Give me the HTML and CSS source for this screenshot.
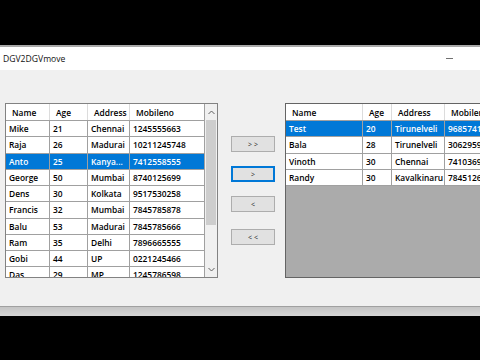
FILE: index.html
```html
<!DOCTYPE html>
<html>
<head>
<meta charset="utf-8">
<link rel="stylesheet" href="styles.css">
</head>
<body>
<div class="letterbox-top"></div>
<div class="window">
  <div class="titlebar">
    <span class="title">DGV2DGVmove</span>
    <span class="minimize"></span>
  </div>
  <div class="client">
    <div class="dgv dgv-left">
      <div class="dgv-body">
        <div class="row head">
          <div class="cell l-name">Name</div>
          <div class="cell l-age">Age</div>
          <div class="cell l-addr">Address</div>
          <div class="cell l-mob">Mobileno</div>
        </div>
        <div class="row"><div class="cell l-name">Mike</div><div class="cell l-age">21</div><div class="cell l-addr">Chennai</div><div class="cell l-mob">1245555663</div></div>
        <div class="row"><div class="cell l-name">Raja</div><div class="cell l-age">26</div><div class="cell l-addr">Madurai</div><div class="cell l-mob">10211245748</div></div>
        <div class="row sel"><div class="cell l-name">Anto</div><div class="cell l-age">25</div><div class="cell l-addr">Kanya...</div><div class="cell l-mob">7412558555</div></div>
        <div class="row"><div class="cell l-name">George</div><div class="cell l-age">50</div><div class="cell l-addr">Mumbai</div><div class="cell l-mob">8740125699</div></div>
        <div class="row"><div class="cell l-name">Dens</div><div class="cell l-age">30</div><div class="cell l-addr">Kolkata</div><div class="cell l-mob">9517530258</div></div>
        <div class="row"><div class="cell l-name">Francis</div><div class="cell l-age">32</div><div class="cell l-addr">Mumbai</div><div class="cell l-mob">7845785878</div></div>
        <div class="row"><div class="cell l-name">Balu</div><div class="cell l-age">53</div><div class="cell l-addr">Madurai</div><div class="cell l-mob">7845785666</div></div>
        <div class="row"><div class="cell l-name">Ram</div><div class="cell l-age">35</div><div class="cell l-addr">Delhi</div><div class="cell l-mob">7896665555</div></div>
        <div class="row"><div class="cell l-name">Gobi</div><div class="cell l-age">44</div><div class="cell l-addr">UP</div><div class="cell l-mob">0221245466</div></div>
        <div class="row"><div class="cell l-name">Das</div><div class="cell l-age">29</div><div class="cell l-addr">MP</div><div class="cell l-mob">1245786598</div></div>
      </div>
      <div class="vscroll">
        <div class="arrow"><svg width="7" height="5" viewBox="0 0 7 5"><polyline points="0.5,4 3.5,1 6.5,4" fill="none" stroke="#606060" stroke-width="1"/></svg></div>
        <div class="thumb"></div>
        <div class="track"></div>
        <div class="arrow"><svg width="7" height="5" viewBox="0 0 7 5"><polyline points="0.5,1 3.5,4 6.5,1" fill="none" stroke="#606060" stroke-width="1"/></svg></div>
      </div>
    </div>

    <div class="buttons">
      <div class="btn">&gt; &gt;</div>
      <div class="btn focus">&gt;</div>
      <div class="btn">&lt;</div>
      <div class="btn last">&lt; &lt;</div>
    </div>

    <div class="dgv dgv-right">
      <div class="row head">
        <div class="cell r-name">Name</div>
        <div class="cell r-age">Age</div>
        <div class="cell r-addr">Address</div>
        <div class="cell r-mob">Mobileno</div>
      </div>
      <div class="row sel"><div class="cell r-name">Test</div><div class="cell r-age">20</div><div class="cell r-addr">Tirunelveli</div><div class="cell r-mob">9685741236</div></div>
      <div class="row"><div class="cell r-name">Bala</div><div class="cell r-age">28</div><div class="cell r-addr">Tirunelveli</div><div class="cell r-mob">3062959874</div></div>
      <div class="row"><div class="cell r-name">Vinoth</div><div class="cell r-age">30</div><div class="cell r-addr">Chennai</div><div class="cell r-mob">7410369852</div></div>
      <div class="row"><div class="cell r-name">Randy</div><div class="cell r-age">30</div><div class="cell r-addr">Kavalkinaru</div><div class="cell r-mob">7845126589</div></div>
    </div>
  </div>
  <div class="frame-bottom"></div>
</div>
</body>
</html>
```
FILE: styles.css
```css
html, body {
  margin: 0;
  padding: 0;
}
body {
  width: 480px;
  height: 360px;
  overflow: hidden;
  background: #000;
  font-family: "Open Sans", "Noto Sans", sans-serif;
  font-size: 8.4px;
  color: #000;
}
.letterbox-top {
  height: 45px;
  background: #000;
}
.window {
  border-top: 2px solid #a8a8a8;
  background: #f0f0f0;
}
.titlebar {
  height: 23px;
  background: #fff;
  display: flex;
  align-items: center;
  justify-content: space-between;
  padding: 0 27px 0 3px;
}
.title {
  font-size: 8.6px;
  color: #111;
}
.minimize {
  width: 7px;
  height: 1px;
  background: #707070;
}
.client {
  height: 236px;
  box-sizing: border-box;
  padding: 33px 0 0 5px;
  display: flex;
  align-items: flex-start;
  overflow: hidden;
}
.frame-bottom {
  height: 9px;
  border-top: 1px solid #a0a0a0;
  background: linear-gradient(#c4c4c4, #d6d6d6);
}

/* grids */
.dgv {
  box-sizing: border-box;
  height: 175px;
  flex: none;
  overflow: hidden;
}
.dgv-left {
  width: 213px;
  border: 1px solid #828282;
  background: #fff;
  display: flex;
}
.dgv-body {
  width: 199px;
  overflow: hidden;
}
.dgv-right {
  width: 260px;
  margin-left: 10px;
  border: 1px solid #646464;
  background: #ababab;
}
.row {
  display: flex;
  height: 16.25px;
  box-sizing: border-box;
  border-bottom: 1px solid #a0a0a0;
  background: #fff;
  font-weight: 600;
}
.row.head {
  height: 17px;
}
.row.sel {
  background: #0078d7;
  color: #fff;
}
.cell {
  box-sizing: border-box;
  flex: none;
  display: flex;
  align-items: center;
  padding-left: 3px;
  border-right: 1px solid #a0a0a0;
  white-space: nowrap;
  overflow: hidden;
}
.head .cell {
  padding-left: 6px;
  border-right-color: #dcdcdc;
}
.l-name { width: 44px; }
.l-age { width: 38px; }
.l-addr { width: 42px; }
.l-mob { width: 75px; border-right: none; }
.r-name { width: 77px; }
.r-age { width: 29px; }
.r-addr { width: 53px; }
.r-mob { width: 100px; }

/* scrollbar */
.vscroll {
  width: 12px;
  background: #f0f0f0;
  display: flex;
  flex-direction: column;
  border-left: 1px solid #a0a0a0;
}
.arrow {
  height: 16px;
  display: flex;
  align-items: center;
  justify-content: center;
  flex: none;
}
.thumb {
  height: 105px;
  margin: 0 1px;
  background: #cdcdcd;
  flex: none;
}
.track {
  flex: 1;
}

/* buttons */
.buttons {
  display: flex;
  flex-direction: column;
  gap: 14px;
  margin: 33px 0 0 13px;
  width: 44px;
  flex: none;
}
.btn {
  box-sizing: border-box;
  height: 16px;
  background: #e1e1e1;
  border: 1px solid #adadad;
  font-size: 7px;
  color: #222;
  display: flex;
  align-items: center;
  justify-content: center;
}
.btn.focus {
  border: 1px solid #0078d7;
  box-shadow: inset 0 0 0 1px #0078d7;
}
.btn.last {
  margin-top: 3px;
}
```
